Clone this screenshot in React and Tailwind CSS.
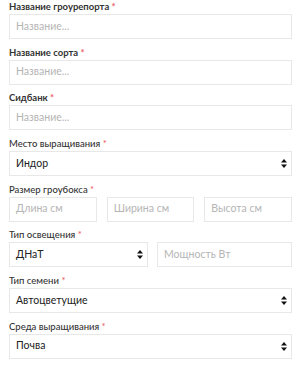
import React from "react";

const font = { fontFamily: "Lato, 'Open Sans', sans-serif" };

function Label({ children, bold }) {
  return (
    <div
      className={
        "text-[9.5px] leading-[14px] text-[#333333] whitespace-nowrap " +
        (bold ? "font-bold" : "font-medium")
      }
    >
      {children} <span className="text-[#ec5a64]">*</span>
    </div>
  );
}

function Arrows() {
  return (
    <svg width="6" height="9" viewBox="0 0 6 9" className="shrink-0">
      <path d="M3 0 L6 3.5 L0 3.5 Z" fill="#111" />
      <path d="M3 9 L6 5.5 L0 5.5 Z" fill="#111" />
    </svg>
  );
}

function Input({ placeholder, className = "" }) {
  return (
    <div
      className={
        "h-[25px] border border-[#e8e8e8] bg-white flex items-center pl-[6px] text-[10.5px] text-[#b5b5b5] " +
        className
      }
    >
      {placeholder}
    </div>
  );
}

function Select({ value, className = "" }) {
  return (
    <div
      className={
        "h-[25px] border border-[#e8e8e8] bg-white flex items-center justify-between pl-[6px] pr-[4px] text-[10.5px] text-[#222222] " +
        className
      }
    >
      <span>{value}</span>
      <Arrows />
    </div>
  );
}

function Field({ label, bold, children }) {
  return (
    <div className="flex flex-col">
      <Label bold={bold}>{label}</Label>
      {children}
    </div>
  );
}

export default function App() {
  return (
    <div className="w-[300px] h-[367px] bg-white pl-[9px] pr-[8px] flex flex-col gap-[6.7px] overflow-hidden" style={font}>
      <Field label="Название гроурепорта" bold>
        <Input placeholder="Название..." />
      </Field>
      <Field label="Название сорта" bold>
        <Input placeholder="Название..." />
      </Field>
      <Field label="Сидбанк" bold>
        <Input placeholder="Название..." />
      </Field>
      <Field label="Место выращивания">
        <Select value="Индор" />
      </Field>
      <Field label="Размер гроубокса">
        <div className="flex gap-[10px]">
          <Input placeholder="Длина см" className="flex-1" />
          <Input placeholder="Ширина см" className="flex-1" />
          <Input placeholder="Высота см" className="flex-1" />
        </div>
      </Field>
      <Field label="Тип освещения">
        <div className="flex gap-[9px]">
          <Select value="ДНаТ" className="flex-1" />
          <Input placeholder="Мощность Вт" className="flex-1" />
        </div>
      </Field>
      <Field label="Тип семени">
        <Select value="Автоцветущие" />
      </Field>
      <Field label="Среда выращивания">
        <Select value="Почва" />
      </Field>
    </div>
  );
}
